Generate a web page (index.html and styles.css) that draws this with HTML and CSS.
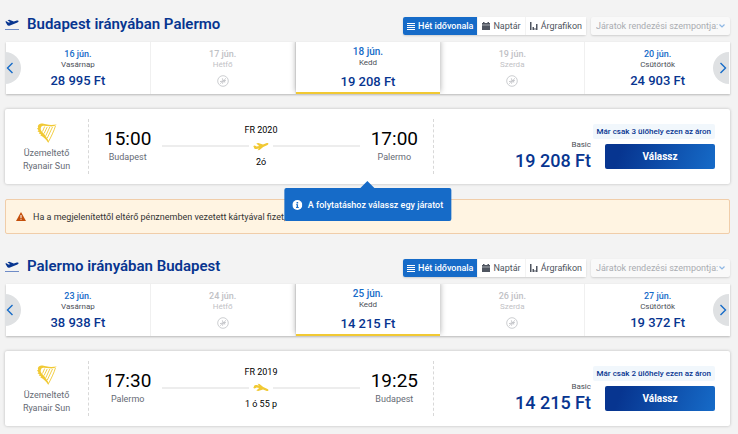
FILE: index.html
```html
<!DOCTYPE html>
<html lang="hu">
<head>
<meta charset="utf-8">
<meta name="viewport" content="width=device-width, initial-scale=1">
<title>Járatválasztás</title>
<link rel="stylesheet" href="styles.css">
</head>
<body>
<svg class="sprite" aria-hidden="true">
  <symbol id="takeoff" viewBox="0 0 14 12"><path d="M0 11.500h14" stroke="#6f8cc7" fill="none"/><path d="M.3 3.600l1.200-.3 1.800 1.300 2-.4L2.500 2.300 4.300 1.700 8.800 3.500l3-.9c2-.4 2.600 1.100.6 1.900L5 7.400c-1.200.4-2 .4-2.700-.3z"/></symbol>
  <symbol id="plane" viewBox="0 0 16 10"><path d="M.3 5l1.500-.4 1.800 1 2.600-.7L3.300 2.500 5.200 1.900 10 3.600 13.200 2.200c2-.7 3.200.7 1.300 1.700L10.200 6 6.500 8.900 4.500 9.200 6 7.400 3.300 8c-.9.200-1.500 0-1.900-.6z"/></symbol>
  <symbol id="harp" viewBox="0 0 20 20"><path d="M.8 3.200C1.500 1 3.200.3 5.500.6L9 1.300c4 .9 7 .6 10.800.2-1.800 1.700-4.500 2.100-7.500 1.800C8.500 2.900 5.500 2 4.200 3.900 3.300 5.400 3.600 7.300 5.200 8.900c2.200 2.200 4.800 5.200 6.600 9.400l-.5 1.600C9 16 6.200 13.600 3.200 12.200l1-.9-2.500-.8 1-1L.5 8.200l1.100-1L0 5.600l1.200-.8z"/><path d="M18.500 2.800C17 8 14 14 11.400 18.800M15.500 4L10.300 15M12.800 4L8.800 12.800M10.200 4L7.100 10.500M7.700 3.500L5.500 8.500" fill="none" stroke="currentColor" stroke-width=".9"/></symbol>
  <symbol id="none" viewBox="0 0 12 12"><g fill="none" stroke="currentColor"><circle cx="6" cy="6" r="5.300" stroke-width=".8"/><path d="M3 9l6-6" stroke-width=".6"/><path d="M3 6.700l6-1.500M5.300 3.300l1 2.700-.8 2.700M7.400 5.500l.4 2" stroke-width=".9"/></g></symbol>
  <symbol id="list" viewBox="0 0 8 8"><path d="M0 1.500h8M0 3.500h8M0 5.500h8M0 7.500h8" stroke="currentColor" fill="none"/></symbol>
  <symbol id="calendar" viewBox="0 0 8 8"><path d="M0 1h1V0h1.500v1h3V0H7v1h1v1.700H0zM0 3.200h8V8H0z"/></symbol>
  <symbol id="chart" viewBox="0 0 8 8"><path d="M0 0h1.500v8H0zM2.500 5H4v3H2.500zM6 2h1.500v6H6zM4.500 6h1v2h-1z"/></symbol>
  <symbol id="left" viewBox="0 0 8 12"><path d="M6.500 1L1.500 6l5 5" fill="none" stroke="currentColor" stroke-width="1.400"/></symbol>
  <symbol id="right" viewBox="0 0 8 12"><path d="M1.500 1l5 5-5 5" fill="none" stroke="currentColor" stroke-width="1.400"/></symbol>
  <symbol id="down" viewBox="0 0 6 4"><path d="M.5.5L3 3 5.500.5" fill="none" stroke="currentColor" stroke-width="1.200"/></symbol>
</svg>
<main class="page">
  <section class="trip">
    <header class="trip-head">
      <h2 class="trip-title"><svg class="title-icon"><use href="#takeoff"/></svg>Budapest irányában Palermo</h2>
      <div class="views">
        <button class="view active"><svg><use href="#list"/></svg>Hét idővonala</button>
        <button class="view"><svg><use href="#calendar"/></svg>Naptár</button>
        <button class="view"><svg><use href="#chart"/></svg>Árgrafikon</button>
      </div>
      <div class="sort"><select aria-label="Járatok rendezési szempontja"><option>Járatok rendezési szempontja:</option></select><svg><use href="#down"/></svg></div>
    </header>
    <div class="week">
      <button class="day"><span class="date">16 jún.</span><span class="name">Vasárnap</span><span class="fare">28 995 Ft</span></button>
      <button class="day off" disabled><span class="date">17 jún.</span><span class="name">Hétfő</span><svg><use href="#none"/></svg></button>
      <button class="day selected"><span class="date">18 jún.</span><span class="name">Kedd</span><span class="fare">19 208 Ft</span></button>
      <button class="day off" disabled><span class="date">19 jún.</span><span class="name">Szerda</span><svg><use href="#none"/></svg></button>
      <button class="day"><span class="date">20 jún.</span><span class="name">Csütörtök</span><span class="fare">24 903 Ft</span></button>
      <button class="arrow prev" aria-label="Előző"><svg><use href="#left"/></svg></button>
      <button class="arrow next" aria-label="Következő"><svg><use href="#right"/></svg></button>
    </div>
    <article class="flight">
      <div class="operator"><svg><use href="#harp"/></svg><span>Üzemeltető</span><span>Ryanair Sun</span></div>
      <div class="journey">
        <div class="stop"><span class="time">15:00</span><span class="city">Budapest</span></div>
        <div class="route"><span>FR 2020</span><div class="line"><svg><use href="#plane"/></svg></div><span>2ó</span></div>
        <div class="stop"><span class="time">17:00</span><span class="city">Palermo</span></div>
      </div>
      <div class="purchase">
        <div class="price"><span class="plan">Basic</span><span class="amount">19 208 Ft</span></div>
        <div class="choose"><span class="seats">Már csak 3 ülőhely ezen az áron</span><button class="select">Válassz</button></div>
      </div>
      <div class="tip" role="tooltip"><svg viewBox="0 0 10 10"><circle cx="5" cy="5" r="5" fill="#fff"/><path d="M4.200 2h1.600v1.400H4.200zM3.700 4.200h2v2.900h.7V8H3.700v-.9h.6v-2h-.6z" fill="#166bc8"/></svg>A folytatáshoz válassz egy járatot</div>
    </article>
  </section>
  <div class="notice"><svg viewBox="0 0 10 9"><path d="M5 0l5 9H0z" fill="#c44f0b"/><path d="M4.500 3h1v3h-1zM4.500 6.700h1v1h-1z" fill="#fff"/></svg>Ha a megjelenítettől eltérő pénznemben vezetett kártyával fizet, a</div>
  <section class="trip">
    <header class="trip-head">
      <h2 class="trip-title"><svg class="title-icon"><use href="#takeoff"/></svg>Palermo irányában Budapest</h2>
      <div class="views">
        <button class="view active"><svg><use href="#list"/></svg>Hét idővonala</button>
        <button class="view"><svg><use href="#calendar"/></svg>Naptár</button>
        <button class="view"><svg><use href="#chart"/></svg>Árgrafikon</button>
      </div>
      <div class="sort"><select aria-label="Járatok rendezési szempontja"><option>Járatok rendezési szempontja:</option></select><svg><use href="#down"/></svg></div>
    </header>
    <div class="week">
      <button class="day"><span class="date">23 jún.</span><span class="name">Vasárnap</span><span class="fare">38 938 Ft</span></button>
      <button class="day off" disabled><span class="date">24 jún.</span><span class="name">Hétfő</span><svg><use href="#none"/></svg></button>
      <button class="day selected"><span class="date">25 jún.</span><span class="name">Kedd</span><span class="fare">14 215 Ft</span></button>
      <button class="day off" disabled><span class="date">26 jún.</span><span class="name">Szerda</span><svg><use href="#none"/></svg></button>
      <button class="day"><span class="date">27 jún.</span><span class="name">Csütörtök</span><span class="fare">19 372 Ft</span></button>
      <button class="arrow prev" aria-label="Előző"><svg><use href="#left"/></svg></button>
      <button class="arrow next" aria-label="Következő"><svg><use href="#right"/></svg></button>
    </div>
    <article class="flight">
      <div class="operator"><svg><use href="#harp"/></svg><span>Üzemeltető</span><span>Ryanair Sun</span></div>
      <div class="journey">
        <div class="stop"><span class="time">17:30</span><span class="city">Palermo</span></div>
        <div class="route"><span>FR 2019</span><div class="line back"><svg><use href="#plane"/></svg></div><span>1 ó 55 p</span></div>
        <div class="stop"><span class="time">19:25</span><span class="city">Budapest</span></div>
      </div>
      <div class="purchase">
        <div class="price"><span class="plan">Basic</span><span class="amount">14 215 Ft</span></div>
        <div class="choose"><span class="seats">Már csak 2 ülőhely ezen az áron</span><button class="select">Válassz</button></div>
      </div>
    </article>
  </section>
</main>
</body>
</html>
```
FILE: styles.css
```css
* { box-sizing: border-box; }
body { margin: 0; background: #f3f3f3; font-family: Roboto, "Liberation Sans", sans-serif; font-size: 9px; color: #000; }
button, select { font: inherit; border: 0; padding: 0; margin: 0; }
svg { display: block; flex: none; fill: currentColor; }
.sprite { position: absolute; width: 0; height: 0; }
.page { padding: 16px 8px 8px 5px; }

.trip-head { display: flex; align-items: center; height: 19px; margin-bottom: 7px; }
.trip-title { display: flex; align-items: center; align-self: flex-start; gap: 8px; margin: 0; flex: 1; font-size: 15px; line-height: 16px; font-weight: 600; color: #073590; white-space: nowrap; }
.title-icon { width: 14px; height: 12px; }
.views { display: flex; height: 18px; border-radius: 2px; background: #fff; box-shadow: 0 1px 2px rgba(0, 0, 0, .15); }
.view { display: flex; align-items: center; gap: 3px; padding: 0 4px; background: #fff; color: #4f5560; white-space: nowrap; }
.view + .view { border-left: 1px solid #f3f3f3; }
.view svg { width: 8px; height: 8px; }
.view.active { background: #166bc8; color: #fff; font-weight: 500; border-radius: 2px 0 0 2px; }
.sort { display: flex; align-items: center; height: 18px; margin-left: 5px; padding: 0 5px; background: #f9f9f9; color: #a9acb1; border-radius: 2px; box-shadow: 0 1px 2px rgba(0, 0, 0, .15); }
.sort select { appearance: none; background: none; color: inherit; }
.sort svg { width: 6px; height: 4px; color: #8db7e4; }

.week { position: relative; display: grid; grid-template-columns: repeat(5, 1fr); height: 52px; margin-left: 1px; background: #fff; box-shadow: 0 1px 2px rgba(0, 0, 0, .25); }
.day { display: flex; flex-direction: column; align-items: center; justify-content: flex-start; padding-top: 6px; background: #fff; border-right: 1px solid #f0f0f0; }
.day:nth-child(5) { border-right: 0; }
.date { font-size: 9px; line-height: 12px; font-weight: 500; color: #166bc8; }
.name { font-size: 8px; line-height: 10px; color: #4b4f57; }
.fare { margin-top: 1px; font-size: 13px; line-height: 20px; font-weight: 500; color: #073590; }
.off .date, .off .name, .off svg { color: #bfc1c5; }
.off svg { width: 12px; height: 12px; margin-top: 5px; }
.selected { position: relative; z-index: 1; padding-top: 4px; border-right: 0; border-bottom: 2px solid #f1c933; box-shadow: 0 -2px 6px rgba(0, 0, 0, .35); clip-path: inset(0 -8px 0 -8px); }
.selected .date { font-size: 10px; line-height: 12px; }
.selected .fare { margin-top: 4px; }
.arrow { position: absolute; z-index: 2; top: 10px; display: grid; place-items: center; width: 16px; height: 32px; background: #dfe1e3; color: #166bc8; }
.arrow svg { width: 8px; height: 12px; }
.prev { left: -1px; border-radius: 0 16px 16px 0; justify-content: start; padding-left: 1px; }
.next { right: 1px; border-radius: 16px 0 0 16px; justify-content: end; padding-right: 2px; }

.flight { position: relative; display: flex; height: 75px; margin-top: 15px; padding: 10px 0; background: #fff; border-radius: 2px; box-shadow: 0 0 3px rgba(0, 0, 0, .25); }
.operator { display: flex; flex-direction: column; align-items: center; width: 84px; padding-top: 4px; border-right: 1px dashed #d8d8d8; line-height: 13px; color: #666b75; }
.operator svg { width: 20px; height: 20px; margin-bottom: 4px; color: #f1c933; }
.journey { display: flex; flex: 1; gap: 11px; padding: 0 15px; border-right: 1px dashed #d8d8d8; }
.stop { display: flex; flex-direction: column; align-items: center; padding-top: 8px; }
.time { font-size: 19px; line-height: 24px; }
.city { line-height: 13px; color: #666b75; }
.route { display: flex; flex-direction: column; flex: 1; align-items: center; padding-top: 5px; line-height: 12px; }
.line { display: flex; align-items: center; align-self: stretch; gap: 4px; height: 20px; }
.line::before, .line::after { content: ""; flex: 1; height: 2px; background: #ededed; }
.line svg { width: 16px; height: 10px; color: #f1c933; }
.back svg { transform: scaleY(-1); }
.purchase { display: flex; justify-content: flex-end; width: 296px; padding: 5px 15px 0 0; color: #073590; }
.price { display: flex; flex-direction: column; align-items: flex-end; padding-top: 15px; }
.plan { font-size: 8px; line-height: 12px; color: #4b4f57; }
.amount { font-size: 18px; line-height: 20px; font-weight: 500; }
.choose { display: flex; flex-direction: column; align-items: flex-end; width: 110px; margin-left: 14px; }
.seats { padding: 0 4px; border-radius: 2px; background: #f1f7fc; font-size: 8px; line-height: 15px; font-weight: 500; white-space: nowrap; }
.select { width: 100%; height: 25px; margin-top: 5px; border-radius: 2px; background: linear-gradient(110deg, #073590 15%, #166bc8); color: #fff; font-size: 10px; font-weight: 700; }

.tip { position: absolute; z-index: 3; top: 79px; left: 50%; transform: translateX(-50%); display: flex; align-items: center; gap: 6px; height: 33px; padding: 0 8px; border-radius: 2px; background: #166bc8; color: #fff; font-weight: 500; white-space: nowrap; }
.tip::before { content: ""; position: absolute; left: 50%; bottom: 100%; margin-left: -7px; border: 7px solid transparent; border-top-width: 0; border-bottom-color: #166bc8; }
.tip svg { width: 10px; height: 10px; }
.notice { display: flex; align-items: center; gap: 7px; height: 35px; margin: 15px 0 24px; padding: 0 10px; border: 1px solid #f0cda9; border-radius: 2px; background: #fff4e2; color: #333; }
.notice svg { width: 10px; height: 9px; }
```
